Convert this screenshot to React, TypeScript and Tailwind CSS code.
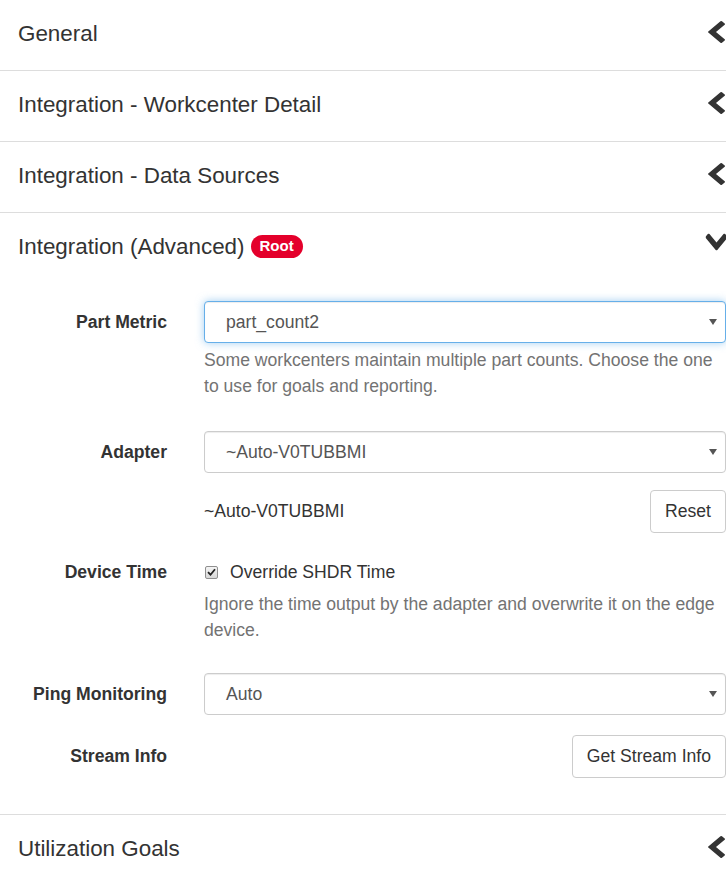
const FONT = 'font-["Liberation_Sans",Arial,sans-serif]';

function Chevron({ down }: { down?: boolean }) {
  return (
    <svg
      width="17"
      height="22"
      viewBox="154 26 1036 1612"
      preserveAspectRatio="none"
      className={down ? '-rotate-90' : ''}
    >
      <path
        fill="#333"
        d="M1171 301l-531 531 531 531q19 19 19 45t-19 45l-166 166q-19 19-45 19t-45-19l-742-742q-19-19-19-45t19-45l742-742q19-19 45-19t45 19l166 166q19 19 19 45t-19 45z"
      />
    </svg>
  );
}

function SectionHeader({ title, open, badge }: { title: string; open?: boolean; badge?: string }) {
  return (
    <div className="h-[70px] flex items-center justify-between pl-[18px] pr-px pb-[3px]">
      <div className="flex items-center">
        <span className="text-[22.4px] text-[#333]">{title}</span>
        {badge && (
          <span className="ml-[6px] h-[23px] px-[9px] rounded-full bg-[#e4002b] text-white text-[15px] font-bold flex items-center">
            {badge}
          </span>
        )}
      </div>
      <div className={open ? 'mt-[-10px]' : 'mt-[-3px]'}>
        <Chevron down={open} />
      </div>
    </div>
  );
}

function FakeSelect({ value, focused }: { value: string; focused?: boolean }) {
  return (
    <div
      className={
        'h-[42px] flex items-center justify-between pl-[21px] pr-[8px] rounded-[4px] border bg-white text-[17.6px] text-[#555] ' +
        (focused
          ? 'border-[#66afe9] shadow-[inset_0_1px_1px_rgba(0,0,0,0.075),0_0_8px_rgba(102,175,233,0.6)]'
          : 'border-[#ccc] shadow-[inset_0_1px_1px_rgba(0,0,0,0.075)]')
      }
    >
      <span>{value}</span>
      <svg width="8" height="6" viewBox="0 0 8 6">
        <path d="M0 0h8L4 6z" fill="#555" />
      </svg>
    </div>
  );
}

function Label({ children, h = 'h-[42px]' }: { children: string; h?: string }) {
  return (
    <div className={`${h} flex items-center justify-end text-[17.6px] font-bold text-[#333]`}>
      {children}
    </div>
  );
}

function Help({ children, className = '' }: { children: string; className?: string }) {
  return <p className={`text-[17.6px] leading-[26px] text-[#737373] ${className}`}>{children}</p>;
}

function Button({ children }: { children: string }) {
  return (
    <button
      type="button"
      className="h-[43px] px-[14px] rounded-[4px] border border-[#ccc] bg-white text-[17.6px] text-[#333]"
    >
      {children}
    </button>
  );
}

export default function App() {
  return (
    <div className={`${FONT} w-full bg-white text-[#333]`}>
      <div className="border-b border-[#ddd]">
        <SectionHeader title="General" />
      </div>
      <div className="border-b border-[#ddd]">
        <SectionHeader title="Integration - Workcenter Detail" />
      </div>
      <div className="border-b border-[#ddd]">
        <SectionHeader title="Integration - Data Sources" />
      </div>
      <div className="border-b border-[#ddd]">
        <SectionHeader title="Integration (Advanced)" badge="Root" open />
        <div className="pt-[18px] pb-[36px] flex flex-col">
          <div className="grid grid-cols-[167px_1fr] gap-x-[37px]">
            <Label>Part Metric</Label>
            <div>
              <FakeSelect value="part_count2" focused />
              <Help className="mt-[4px]">
                Some workcenters maintain multiple part counts. Choose the one to use for goals and reporting.
              </Help>
            </div>
          </div>

          <div className="grid grid-cols-[167px_1fr] gap-x-[37px] mt-[32px]">
            <Label>Adapter</Label>
            <div>
              <FakeSelect value="~Auto-V0TUBBMI" />
              <div className="mt-[17px] flex items-center justify-between">
                <span className="text-[17.6px] text-[#333]">~Auto-V0TUBBMI</span>
                <Button>Reset</Button>
              </div>
            </div>
          </div>

          <div className="grid grid-cols-[167px_1fr] gap-x-[37px] mt-[26px]">
            <Label h="h-[26px]">Device Time</Label>
            <div>
              <div className="h-[26px] flex items-center">
                <span className="ml-px w-[13px] h-[13px] rounded-[2px] border border-[#8f8f8f] bg-gradient-to-b from-[#f4f4f4] to-[#d8d8d8] flex items-center justify-center">
                  <svg width="9" height="8" viewBox="0 0 9 8">
                    <path d="M1 4.2L3.5 6.7 8 1.2" stroke="#222" strokeWidth="1.8" fill="none" />
                  </svg>
                </span>
                <span className="ml-[12px] text-[17.6px] text-[#333]">Override SHDR Time</span>
              </div>
              <Help className="mt-[6px]">
                Ignore the time output by the adapter and overwrite it on the edge device.
              </Help>
            </div>
          </div>

          <div className="grid grid-cols-[167px_1fr] gap-x-[37px] mt-[30px]">
            <Label>Ping Monitoring</Label>
            <FakeSelect value="Auto" />
          </div>

          <div className="grid grid-cols-[167px_1fr] gap-x-[37px] mt-[20px]">
            <Label h="h-[43px]">Stream Info</Label>
            <div className="flex justify-end">
              <Button>Get Stream Info</Button>
            </div>
          </div>
        </div>
      </div>
      <div>
        <SectionHeader title="Utilization Goals" />
      </div>
    </div>
  );
}
